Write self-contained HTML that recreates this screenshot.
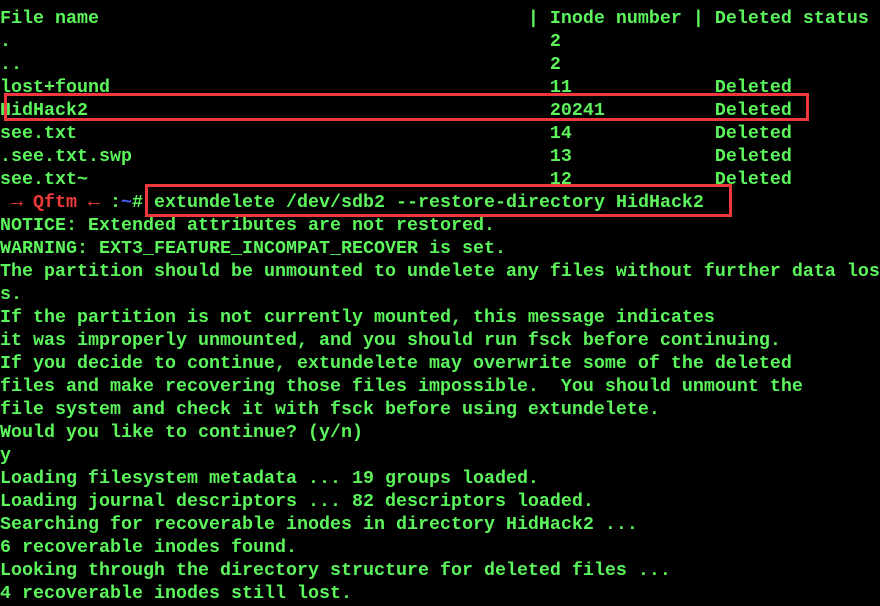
<!DOCTYPE html>
<html><head><meta charset="utf-8"><style>
html,body{margin:0;padding:0;background:#000;width:880px;height:606px;overflow:hidden}
pre,.p{font-family:"Liberation Mono",monospace;font-weight:bold;font-size:18.33px;line-height:23px;color:#5cf55c;white-space:pre}
pre{position:absolute;left:0;top:7px;margin:0}
.p{position:absolute;top:191px}
.r{color:#f03a3a}.b{color:#4a5cf5}
.box{position:absolute;border:3px solid #f0383c;box-sizing:border-box}
</style></head><body>
<pre>File name                                       | Inode number | Deleted status
.                                                 2
..                                                2
lost+found                                        11             Deleted
HidHack2                                          20241          Deleted
see.txt                                           14             Deleted
.see.txt.swp                                      13             Deleted
see.txt~                                          12             Deleted

NOTICE: Extended attributes are not restored.
WARNING: EXT3_FEATURE_INCOMPAT_RECOVER is set.
The partition should be unmounted to undelete any files without further data los
s.
If the partition is not currently mounted, this message indicates
it was improperly unmounted, and you should run fsck before continuing.
If you decide to continue, extundelete may overwrite some of the deleted
files and make recovering those files impossible.  You should unmount the
file system and check it with fsck before using extundelete.
Would you like to continue? (y/n)
y
Loading filesystem metadata ... 19 groups loaded.
Loading journal descriptors ... 82 descriptors loaded.
Searching for recoverable inodes in directory HidHack2 ...
6 recoverable inodes found.
Looking through the directory structure for deleted files ...
4 recoverable inodes still lost.</pre>
<span class="p r" style="left:11px;font-size:20px">→</span>
<span class="p r" style="left:33px">Qftm</span>
<span class="p r" style="left:88px;font-size:20px">←</span>
<span class="p" style="left:110px">:<span class="b">~</span>#</span>
<span class="p" style="left:154px">extundelete /dev/sdb2 --restore-directory HidHack2</span>
<div class="box" style="left:4px;top:93px;width:805px;height:28px"></div>
<div class="box" style="left:145px;top:184px;width:587px;height:33px"></div>
</body></html>
